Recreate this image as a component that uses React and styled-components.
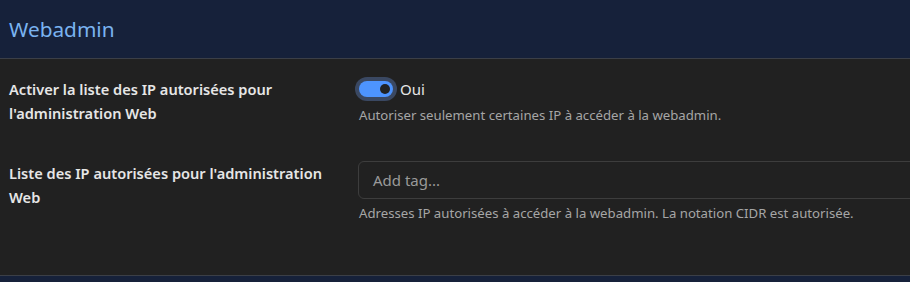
import React from 'react';
import styled, { createGlobalStyle } from 'styled-components';

const GlobalStyle = createGlobalStyle`
  html, body {
    margin: 0;
    padding: 0;
    background: #16213a;
    font-family: "Noto Sans", "Open Sans", sans-serif;
  }
`;

const Panel = styled.section`
  width: 910px;
  height: 282px;
  background: #16213a;
  overflow: hidden;
`;

const Header = styled.header`
  height: 59px;
  display: flex;
  align-items: center;
  padding: 0 9px;
  box-sizing: border-box;
  border-bottom: 1px solid #3b3f47;
`;

const Title = styled.h2`
  margin: 0;
  font-size: 20.8px;
  font-weight: 400;
  color: #7ab3f0;
`;

const Body = styled.div`
  background: #212121;
  height: 217px;
  padding: 18px 0 0 9px;
  box-sizing: border-box;
  border-bottom: 1px solid #3b3f47;
`;

const Row = styled.div`
  display: grid;
  grid-template-columns: 349px 1fr;
  margin-bottom: ${({ gap }) => gap || 0}px;
`;

const Label = styled.label`
  font-size: 14.6px;
  font-weight: 600;
  line-height: 24px;
  color: #e6e6e6;
  padding-right: 18px;
`;

const Control = styled.div`
  display: flex;
  flex-direction: column;
`;

const SwitchLine = styled.div`
  display: flex;
  align-items: center;
  gap: 7px;
  height: 24px;
`;

const Switch = styled.span`
  position: relative;
  width: 34px;
  height: 16px;
  border-radius: 8px;
  background: #4d94ff;
  box-shadow: 0 0 0 4px #3a4862;
  margin-left: 1px;
  &::after {
    content: '';
    position: absolute;
    right: 3px;
    top: 3px;
    width: 10px;
    height: 10px;
    border-radius: 50%;
    background: #222222;
  }
`;

const SwitchText = styled.span`
  font-size: 15px;
  color: #e6e6e6;
`;

const Help = styled.p`
  margin: ${({ top }) => top}px 0 0 1px;
  font-size: 13.2px;
  color: #a6a6a6;
  line-height: 16px;
`;

const TagInput = styled.div`
  height: 38px;
  width: 600px;
  box-sizing: border-box;
  border: 1px solid #3d3d3d;
  border-radius: 6px;
  display: flex;
  align-items: center;
  padding-left: 14px;
  font-size: 15px;
  color: #9a9a9a;
`;

export default function App() {
  return (
    <>
      <GlobalStyle />
      <Panel>
        <Header>
          <Title>Webadmin</Title>
        </Header>
        <Body>
          <Row gap={36}>
            <Label>Activer la liste des IP autorisées pour l'administration Web</Label>
            <Control>
              <SwitchLine>
                <Switch />
                <SwitchText>Oui</SwitchText>
              </SwitchLine>
              <Help top={6}>Autoriser seulement certaines IP à accéder à la webadmin.</Help>
            </Control>
          </Row>
          <Row>
            <Label>Liste des IP autorisées pour l'administration Web</Label>
            <Control>
              <TagInput>Add tag...</TagInput>
              <Help top={6}>Adresses IP autorisées à accéder à la webadmin. La notation CIDR est autorisée.</Help>
            </Control>
          </Row>
        </Body>
      </Panel>
    </>
  );
}
